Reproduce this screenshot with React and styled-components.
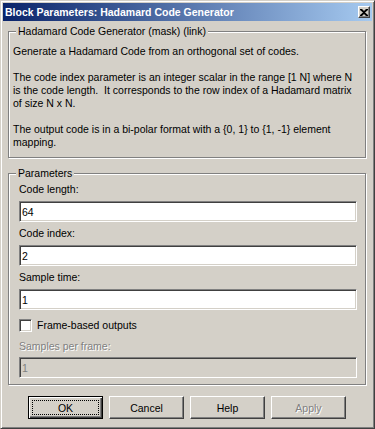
import styled, { createGlobalStyle } from "styled-components";

const Global = createGlobalStyle`
  html, body { margin: 0; padding: 0; background: #D4D0C8; }
  body { font-family: "Liberation Sans", Arial, sans-serif; font-size: 10.5px; color: #000; }
  * { box-sizing: border-box; }
`;

const Window = styled.div`
  width: 375px;
  height: 429px;
  overflow: hidden;
  border: 1px solid;
  border-color: #D4D0C8 #404040 #404040 #D4D0C8;
  box-shadow: inset 1px 1px #FFFFFF, inset -1px -1px #808080;
  padding: 2px;
  background: #D4D0C8;
  display: flex;
  flex-direction: column;
`;

const TitleBar = styled.div`
  height: 18px;
  flex: none;
  background: linear-gradient(to right, #0A246A, #A6CAF0);
  display: flex;
  align-items: center;
  justify-content: space-between;
  padding: 0 2px 0 2px;
  color: #FFFFFF;
  font-weight: bold;
  font-size: 10.5px;
  white-space: nowrap;
`;

const CloseButton = styled.div`
  width: 12px;
  height: 12px;
  background: #D4D0C8;
  border: 1px solid;
  border-color: #FFFFFF #404040 #404040 #FFFFFF;
  box-shadow: inset -1px -1px #808080;
  display: flex;
  align-items: center;
  justify-content: center;
`;

const Client = styled.div`
  flex: 1;
  display: flex;
  flex-direction: column;
  padding: 10px 6px 0 5px;
`;

const Group = styled.div`
  position: relative;
  flex: none;
  border: 1px solid #808080;
  box-shadow: inset 1px 1px #FFFFFF, 1px 1px #FFFFFF;
  margin-top: ${p => p.$top || 0}px;
  padding: ${p => p.$pad};
`;

const Caption = styled.span`
  position: absolute;
  top: -7px;
  left: 7px;
  padding: 0 2px;
  line-height: 13px;
  white-space: nowrap;
  background: #D4D0C8;
`;

const Para = styled.p`
  margin: 0 0 13px;
  line-height: 13px;
  white-space: nowrap;
  &:last-child { margin-bottom: 0; }
`;

const Label = styled.div`
  line-height: 13px;
  height: 13px;
  margin-top: ${p => p.$top || 0}px;
  white-space: nowrap;
  color: ${p => (p.$disabled ? "#808080" : "#000")};
  text-shadow: ${p => (p.$disabled ? "1px 1px #FFFFFF" : "none")};
`;

const Field = styled.input`
  display: block;
  width: 100%;
  height: 21px;
  margin: ${p => (p.disabled ? "4px 0 0" : "5px 0 5px")};
  padding: 0 2px;
  border: 1px solid;
  border-color: #808080 #FFFFFF #FFFFFF #808080;
  box-shadow: inset 1px 1px #404040, inset -1px -1px #D4D0C8;
  background: ${p => (p.disabled ? "#D4D0C8" : "#FFFFFF")};
  color: ${p => (p.disabled ? "#808080" : "#000")};
  font-family: "Liberation Sans", Arial, sans-serif;
  font-size: 10.5px;
  outline: none;
  &:disabled { -webkit-text-fill-color: #808080; opacity: 1; }
`;

const CheckRow = styled.label`
  display: flex;
  align-items: center;
  gap: 5px;
  height: 13px;
  margin-top: 9px;
  line-height: 13px;
  white-space: nowrap;
`;

const CheckBox = styled.span`
  width: 13px;
  height: 13px;
  border: 1px solid;
  border-color: #808080 #FFFFFF #FFFFFF #808080;
  box-shadow: inset 1px 1px #404040, inset -1px -1px #D4D0C8;
  background: #FFFFFF;
`;

const ButtonRow = styled.div`
  display: flex;
  justify-content: center;
  gap: 6px;
  margin-top: 11px;
`;

const Button = styled.button`
  position: relative;
  flex: none;
  width: 75px;
  height: 23px;
  padding: 0;
  background: #D4D0C8;
  font-family: "Liberation Sans", Arial, sans-serif;
  font-size: 10.5px;
  color: ${p => (p.disabled ? "#808080" : "#000")};
  text-shadow: ${p => (p.disabled ? "1px 1px #FFFFFF" : "none")};
  border: 1px solid;
  border-color: ${p => (p.$default ? "#000" : "#FFFFFF #404040 #404040 #FFFFFF")};
  box-shadow: ${p =>
    p.$default
      ? "inset 1px 1px #FFFFFF, inset -1px -1px #404040, inset -2px -2px #808080"
      : "inset -1px -1px #808080"};
  ${p =>
    p.$default &&
    `&::after {
      content: "";
      position: absolute;
      inset: 3px;
      border: 1px dotted #000;
    }`}
`;

export default function App() {
  return (
    <>
      <Global />
      <Window>
        <TitleBar>
          <span>Block Parameters: Hadamard Code Generator</span>
          <CloseButton>
            <svg width="8" height="7" viewBox="0 0 8 7">
              <path d="M0 0h2l2 2 2-2h2v1L5 3.5 8 6v1H6L4 5 2 7H0V6l3-2.5L0 1z" fill="#000" />
            </svg>
          </CloseButton>
        </TitleBar>
        <Client>
          <Group $pad="13px 4px 8px">
            <Caption>Hadamard Code Generator (mask) (link)</Caption>
            <Para>Generate a Hadamard Code from an orthogonal set of codes.</Para>
            <Para>
              The code index parameter is an integer scalar in the range [1 N] where N
              <br />is the code length.&nbsp; It corresponds to the row index of a Hadamard matrix
              <br />of size N x N.
            </Para>
            <Para>
              The output code is in a bi-polar format with a {"{0, 1}"} to {"{1, -1}"} element
              <br />mapping.
            </Para>
          </Group>
          <Group $top={15} $pad="9px 8px 6px 10px">
            <Caption>Parameters</Caption>
            <Label>Code length:</Label>
            <Field defaultValue="64" readOnly />
            <Label>Code index:</Label>
            <Field defaultValue="2" readOnly />
            <Label>Sample time:</Label>
            <Field defaultValue="1" readOnly />
            <CheckRow>
              <CheckBox />
              Frame-based outputs
            </CheckRow>
            <Label $top={8} $disabled>Samples per frame:</Label>
            <Field defaultValue="1" disabled />
          </Group>
          <ButtonRow>
            <Button $default>OK</Button>
            <Button>Cancel</Button>
            <Button>Help</Button>
            <Button disabled>Apply</Button>
          </ButtonRow>
        </Client>
      </Window>
    </>
  );
}
